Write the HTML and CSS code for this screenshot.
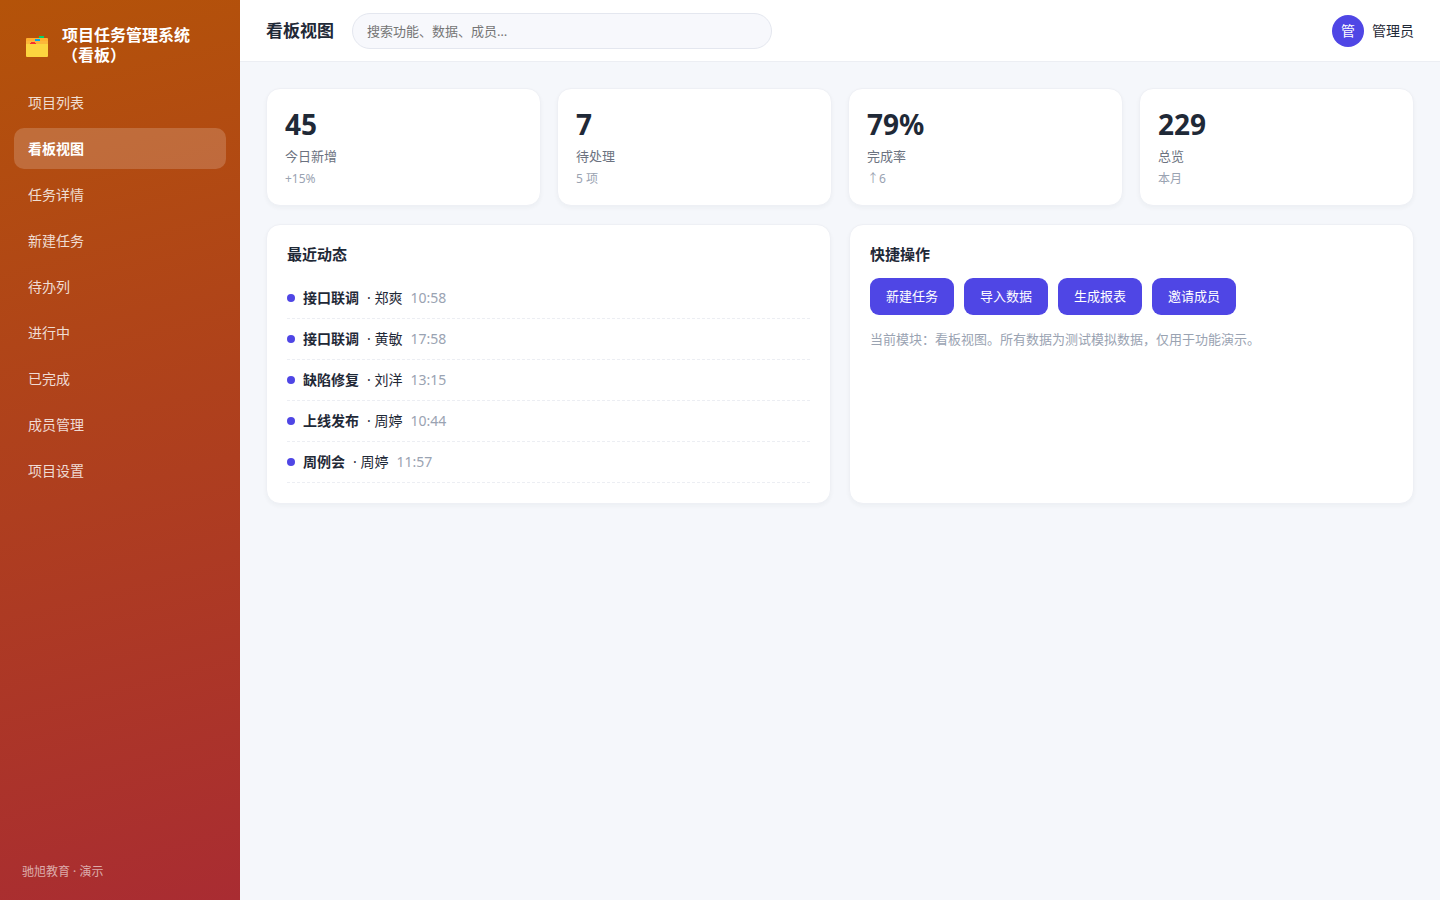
FILE: index.html
```html
<!DOCTYPE html>
<html lang="zh-CN">
<head>
  <meta charset="UTF-8" />
  <meta name="viewport" content="width=device-width, initial-scale=1.0" />
  <title>项目任务管理系统（看板）</title>
  <link rel="stylesheet" href="styles.css">
</head>
<body>
  <div class="app">
    <aside class="sidebar">
      <div class="brand">
        <svg class="brand-icon" viewBox="0 -4 22 26" aria-hidden="true">
          <rect x="13" y="0" width="5" height="3" fill="#00d26a"/>
          <rect x="0" y="2" width="22" height="10" rx="1" fill="#ffb02e"/>
          <rect x="0" y="5" width="22" height="4" fill="#fcb73a"/>
          <rect x="9" y="3" width="5" height="2" fill="#00a6ed"/>
          <rect x="5" y="6" width="4" height="1" fill="#f8312f"/>
          <path d="M0 8h22v12q0 1-1 1H1q-1 0-1-1z" fill="#fcd53f"/>
          <rect x="4" y="7" width="6" height="1" fill="#f8312f"/>
        </svg>
        <span class="brand-name">项目任务管理系统（看板）</span>
      </div>
      <nav class="nav">
        <a href="#" class="nav-item">项目列表</a>
        <a href="#" class="nav-item active">看板视图</a>
        <a href="#" class="nav-item">任务详情</a>
        <a href="#" class="nav-item">新建任务</a>
        <a href="#" class="nav-item">待办列</a>
        <a href="#" class="nav-item">进行中</a>
        <a href="#" class="nav-item">已完成</a>
        <a href="#" class="nav-item">成员管理</a>
        <a href="#" class="nav-item">项目设置</a>
      </nav>
      <div class="sidebar-foot">驰旭教育 · 演示</div>
    </aside>

    <div class="main">
      <header class="topbar">
        <h1 class="page-title">看板视图</h1>
        <input type="search" class="search" placeholder="搜索功能、数据、成员…" aria-label="搜索" />
        <div class="user">
          <span class="avatar">管</span>
          <span>管理员</span>
        </div>
      </header>

      <main class="content">
        <section class="stats">
          <div class="card stat">
            <div class="stat-num">45</div>
            <div class="stat-label">今日新增</div>
            <div class="stat-sub">+15%</div>
          </div>
          <div class="card stat">
            <div class="stat-num">7</div>
            <div class="stat-label">待处理</div>
            <div class="stat-sub">5 项</div>
          </div>
          <div class="card stat">
            <div class="stat-num">79%</div>
            <div class="stat-label">完成率</div>
            <div class="stat-sub">↑6</div>
          </div>
          <div class="card stat">
            <div class="stat-num">229</div>
            <div class="stat-label">总览</div>
            <div class="stat-sub">本月</div>
          </div>
        </section>

        <section class="panels">
          <div class="card panel">
            <h2 class="panel-title">最近动态</h2>
            <ul class="feed">
              <li class="feed-item"><span class="dot"></span><b>接口联调</b><span>· 郑爽</span><time>10:58</time></li>
              <li class="feed-item"><span class="dot"></span><b>接口联调</b><span>· 黄敏</span><time>17:58</time></li>
              <li class="feed-item"><span class="dot"></span><b>缺陷修复</b><span>· 刘洋</span><time>13:15</time></li>
              <li class="feed-item"><span class="dot"></span><b>上线发布</b><span>· 周婷</span><time>10:44</time></li>
              <li class="feed-item"><span class="dot"></span><b>周例会</b><span>· 周婷</span><time>11:57</time></li>
            </ul>
          </div>
          <div class="card panel">
            <h2 class="panel-title">快捷操作</h2>
            <div class="actions">
              <button type="button" class="btn">新建任务</button>
              <button type="button" class="btn">导入数据</button>
              <button type="button" class="btn">生成报表</button>
              <button type="button" class="btn">邀请成员</button>
            </div>
            <p class="note">当前模块：看板视图。所有数据为测试模拟数据，仅用于功能演示。</p>
          </div>
        </section>
      </main>
    </div>
  </div>
</body>
</html>
```
FILE: styles.css
```css
* {
  box-sizing: border-box;
}
body {
  margin: 0;
  font-family: "Noto Sans", "Noto Sans CJK SC", sans-serif;
  font-size: 14px;
  line-height: 20px;
  color: #1f2937;
  background: #f5f7fb;
}
.app {
  display: flex;
  min-height: 100vh;
}

/* sidebar */
.sidebar {
  flex: 0 0 240px;
  display: flex;
  flex-direction: column;
  padding: 25px 14px 18px;
  color: #fff;
  background: linear-gradient(165deg, #b45309, #a92c32);
}
.brand {
  display: flex;
  align-items: center;
  gap: 14px;
  padding: 0 12px;
  margin-bottom: 17px;
}
.brand-icon {
  flex: none;
  width: 22px;
  height: 26px;
}
.brand-name {
  font-size: 16px;
  font-weight: 600;
}
.nav {
  display: flex;
  flex-direction: column;
  gap: 5px;
}
.nav-item {
  padding: 11px 14px;
  line-height: 19px;
  border-radius: 10px;
  color: rgba(255, 255, 255, 0.82);
  text-decoration: none;
}
.nav-item.active {
  color: #fff;
  font-weight: 600;
  background: rgba(255, 255, 255, 0.18);
}
.sidebar-foot {
  margin-top: auto;
  padding: 0 8px;
  font-size: 12px;
  color: rgba(255, 255, 255, 0.6);
}

/* top bar */
.main {
  flex: 1;
  min-width: 0;
}
.topbar {
  display: flex;
  align-items: center;
  gap: 18px;
  height: 62px;
  padding: 0 26px;
  background: #fff;
  border-bottom: 1px solid #eceef3;
}
.page-title {
  margin: 0;
  font-size: 17px;
  font-weight: 700;
}
.search {
  flex: 0 1 420px;
  min-width: 0;
  height: 36px;
  padding: 0 14px;
  font-family: inherit;
  font-size: 13px;
  color: inherit;
  background: #f7f8fc;
  border: 1px solid #e4e7ef;
  border-radius: 18px;
  outline: none;
  appearance: none;
}
.search::placeholder {
  color: #757575;
}
.user {
  display: flex;
  align-items: center;
  gap: 8px;
  margin-left: auto;
}
.avatar {
  width: 32px;
  height: 32px;
  line-height: 32px;
  border-radius: 50%;
  text-align: center;
  color: #fff;
  background: #4f46e5;
}

/* content */
.content {
  padding: 26px;
}
.card {
  background: #fff;
  border: 1px solid #eef0f5;
  border-radius: 14px;
  box-shadow: 0 2px 4px rgba(31, 41, 55, 0.04);
}
.stats {
  display: grid;
  grid-template-columns: repeat(4, 1fr);
  gap: 16px;
  margin-bottom: 18px;
}
.stat {
  padding: 16px 18px;
}
.stat-num {
  font-size: 28px;
  font-weight: 700;
  line-height: 38px;
}
.stat-label {
  margin-top: 3px;
  font-size: 13px;
  color: #6b7280;
}
.stat-sub {
  margin-top: 3px;
  font-size: 12px;
  color: #9aa3b2;
}
.panels {
  display: grid;
  grid-template-columns: 1fr 1fr;
  gap: 18px;
}
.panel {
  padding: 20px;
}
.panel-title {
  margin: 0 0 14px;
  font-size: 15px;
  font-weight: 600;
  line-height: 19px;
}
.feed {
  margin: 0;
  padding: 0;
  list-style: none;
}
.feed-item {
  display: flex;
  align-items: center;
  gap: 8px;
  padding: 10px 0;
  border-bottom: 1px dashed #eceef3;
}
.dot {
  width: 8px;
  height: 8px;
  border-radius: 50%;
  background: #4f46e5;
}
.feed-item time {
  color: #9aa3b2;
}
.actions {
  display: flex;
  flex-wrap: wrap;
  gap: 10px;
}
.btn {
  padding: 9px 16px;
  font-family: inherit;
  font-size: 13px;
  line-height: 19px;
  color: #fff;
  background: #4f46e5;
  border: 0;
  border-radius: 9px;
  cursor: pointer;
}
.note {
  margin: 14px 0 0;
  font-size: 13px;
  color: #9aa3b2;
}
```
